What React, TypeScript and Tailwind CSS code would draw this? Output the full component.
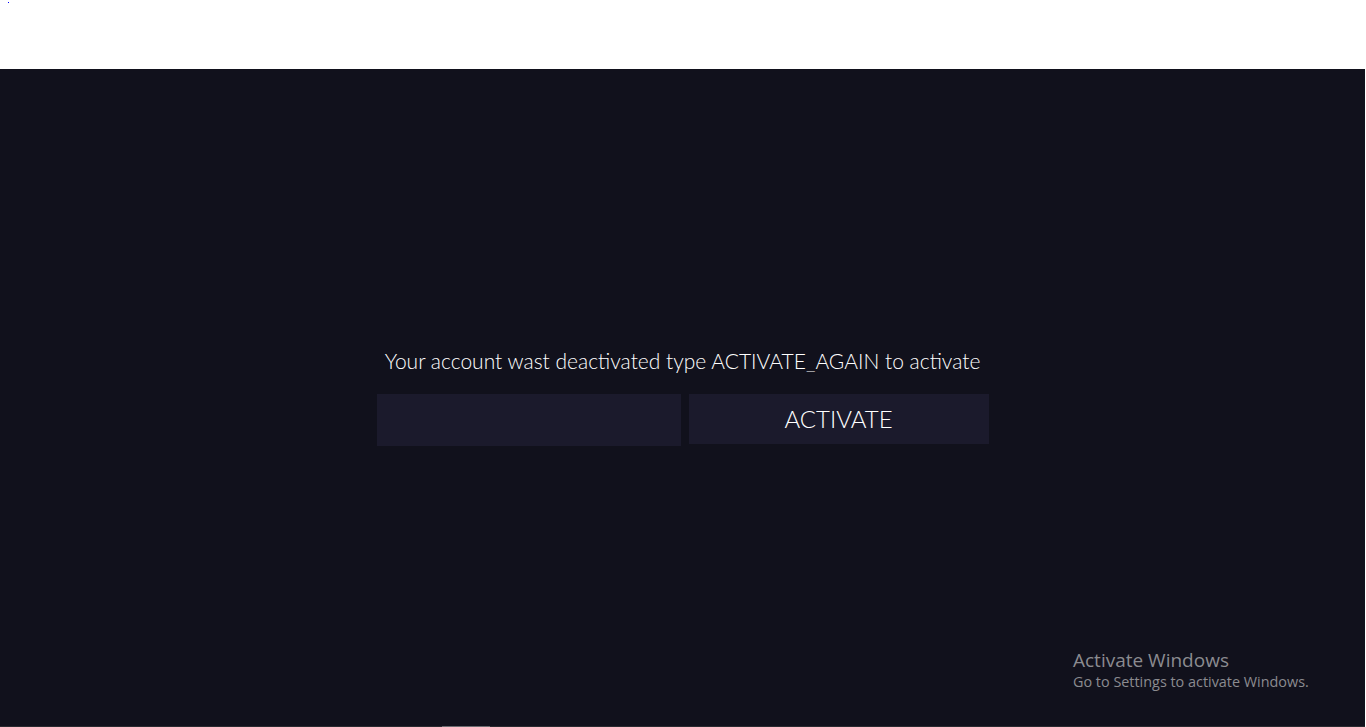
import React from "react";

export default function App() {
  return (
    <div className="w-[1366px] h-[727px] bg-white flex flex-col overflow-hidden relative">
      <div className="h-[69px] shrink-0 relative">
        <div className="absolute left-[8px] top-[2px] w-[1px] h-[1px] bg-[#0000ff]" />
      </div>
      <div className="flex-1 w-[1365px] bg-[#11111c] flex flex-col items-center pt-[280px] relative font-['Lato',sans-serif]">
        <p className="text-[21px] leading-[24px] font-light text-white">
          Your account wast deactivated type ACTIVATE_AGAIN to activate
        </p>
        <div className="flex items-start gap-[8px] mt-[21px]">
          <input className="w-[304px] h-[52px] bg-[#1b1a2c] outline-none text-white px-3" />
          <button className="w-[300px] h-[50px] bg-[#1b1a2c] text-white text-[24px] font-light">
            ACTIVATE
          </button>
        </div>
        <div className="absolute left-[1073px] top-[579px] font-['Open_Sans',sans-serif] text-[#8b8b90]">
          <div className="text-[19px] leading-[24px]">Activate Windows</div>
          <div className="text-[14.4px] leading-[20px]">Go to Settings to activate Windows.</div>
        </div>
        <div className="absolute left-0 bottom-0 w-full h-[1px] bg-[#2a2a30]">
          <div className="absolute left-[442px] w-[48px] h-[1px] bg-[#6b6b70]" />
        </div>
      </div>
    </div>
  );
}
